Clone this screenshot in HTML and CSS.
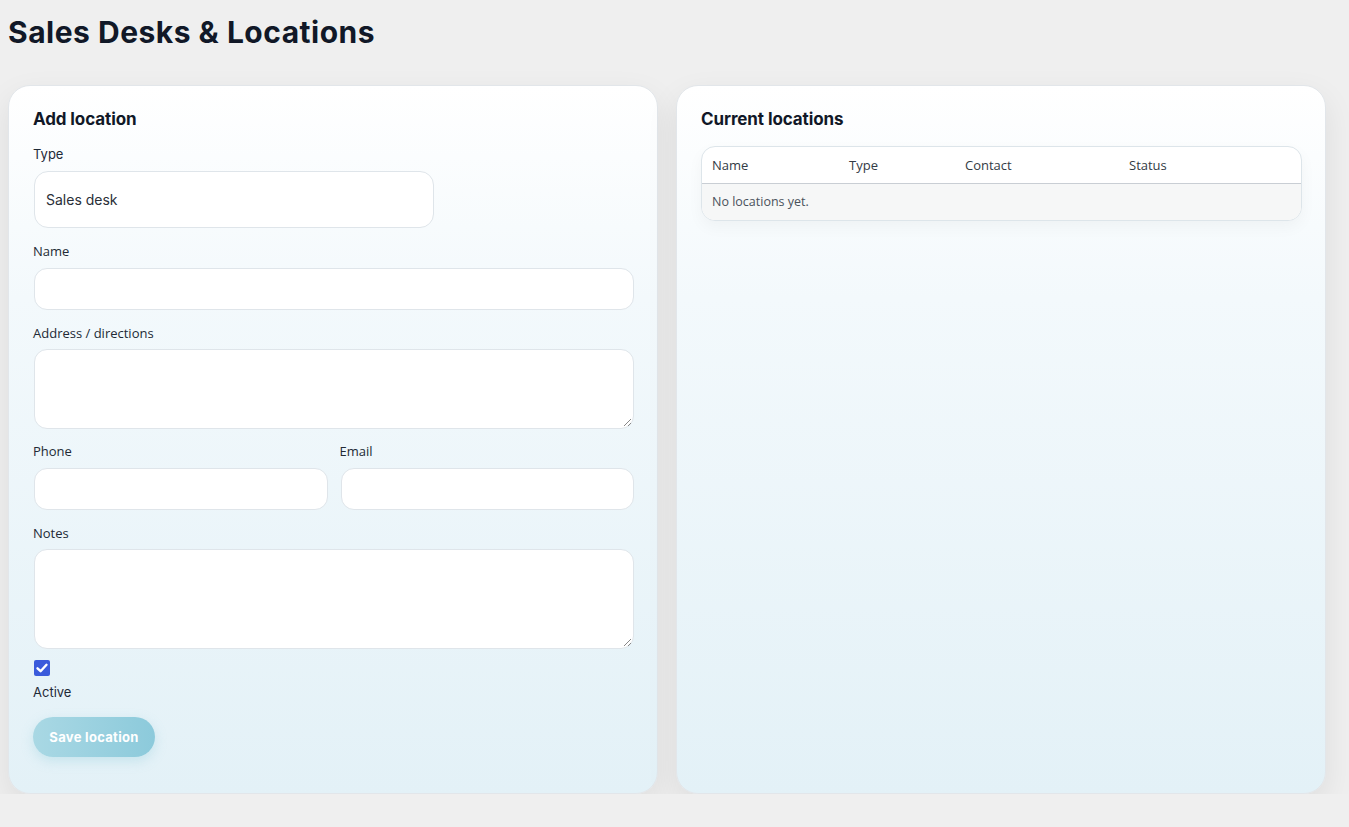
FILE: index.html
```html
<!DOCTYPE html>
<html>
<head>
<meta charset="utf-8">
<link rel="stylesheet" href="styles.css">
</head>
<body>
<h1 class="title">Sales Desks &amp; Locations</h1>
<div class="panels">
  <section class="panel">
    <h2 class="panel-title">Add location</h2>
    <label class="label">Type</label>
    <div class="select">Sales desk</div>
    <label class="label label-alt">Name</label>
    <div class="input"></div>
    <label class="label label-alt">Address / directions</label>
    <div class="textarea ta-short"><span class="grip"></span></div>
    <div class="row2">
      <div class="col">
        <label class="label label-alt">Phone</label>
        <div class="input"></div>
      </div>
      <div class="col">
        <label class="label label-alt">Email</label>
        <div class="input"></div>
      </div>
    </div>
    <label class="label label-alt">Notes</label>
    <div class="textarea ta-tall"><span class="grip"></span></div>
    <div class="check">
      <svg width="16" height="16" viewBox="0 0 16 16"><rect width="16" height="16" rx="2" fill="#3b5bdb"/><path d="M3.5 8.3 L6.6 11.2 L12.5 4.8" fill="none" stroke="#fff" stroke-width="2.4" stroke-linecap="round" stroke-linejoin="round"/></svg>
    </div>
    <div class="label active">Active</div>
    <button class="btn">Save location</button>
  </section>
  <section class="panel">
    <h2 class="panel-title">Current locations</h2>
    <div class="table">
      <div class="thead">
        <div class="c1">Name</div><div class="c2">Type</div><div class="c3">Contact</div><div class="c4">Status</div>
      </div>
      <div class="empty">No locations yet.</div>
    </div>
  </section>
</div>
</body>
</html>
```
FILE: styles.css
```css
html, body { margin: 0; padding: 0; }
body {
  background: #efefef;
  font-family: Inter, "Liberation Sans", sans-serif;
  color: #1b2130;
  padding: 0 8px;
}
.title {
  margin: 0;
  padding-top: 14px;
  height: 85px;
  box-sizing: border-box;
  font-size: 30px;
  font-weight: 700;
  letter-spacing: 0.5px;
  color: #111827;
  line-height: 36px;
}
.panels {
  display: flex;
  gap: 18px;
}
.panel {
  width: 650px;
  height: 709px;
  box-sizing: border-box;
  border-radius: 22px;
  border: 1px solid #e2e6ea;
  background: linear-gradient(180deg, #ffffff 0%, #f3f9fc 30%, #e3f1f7 100%);
  box-shadow: 0 12px 32px rgba(0,0,0,0.08);
  padding: 22px 23px 24px 24px;
}
.panel-title {
  margin: 0 0 16px;
  font-size: 17px;
  font-weight: 700;
  line-height: 22px;
  color: #111827;
  letter-spacing: -0.1px;
}
.label {
  display: block;
  font-size: 13px;
  line-height: 16px;
  color: #1f2937;
  margin-bottom: 9px;
}
.label-alt { font-family: "Open Sans", sans-serif; color: #222a35; }
.select, .input, .textarea {
  box-sizing: border-box;
  background: #fff;
  border: 1px solid #dfe5ea;
  margin-left: 1px;
}
.select {
  width: 400px;
  height: 57px;
  border-radius: 14px;
  font-size: 14px;
  line-height: 55px;
  padding-left: 11px;
  color: #2a2f38;
  margin-bottom: 15px;
}
.input {
  height: 42px;
  border-radius: 13px;
  margin-bottom: 15px;
}
.textarea {
  position: relative;
  border-radius: 13px;
  margin-top: -1px;
  margin-bottom: 15px;
}
.ta-short { height: 80px; margin-bottom: 14px; }
.ta-tall { height: 100px; margin-bottom: 11px; }
.grip {
  position: absolute;
  right: 2px;
  bottom: 2px;
  width: 7px;
  height: 7px;
  background: linear-gradient(135deg, transparent 45%, #888 45%, #888 55%, transparent 55%, transparent 75%, #888 75%, #888 85%, transparent 85%);
}
.row2 {
  display: flex;
  gap: 12px;
}
.col { flex: 1; }
.check { height: 16px; margin-left: 1px; margin-bottom: 8px; }
.check svg { display: block; }
.active { margin-bottom: 17px; }
.btn {
  border: none;
  width: 122px;
  height: 40px;
  border-radius: 20px;
  background: linear-gradient(90deg, #a9d8e4, #8ccadb);
  color: #fff;
  font-family: Inter, sans-serif;
  font-weight: 700;
  font-size: 13px;
  letter-spacing: 0.3px;
  box-shadow: 0 4px 12px rgba(140,202,219,0.35);
  padding: 0;
}
.table {
  border: 1px solid #dde5ea;
  border-radius: 14px;
  overflow: hidden;
  background: #fff;
  box-shadow: 0 6px 16px rgba(0,0,0,0.04);
  margin-top: 2px;
}
.thead {
  display: flex;
  height: 36px;
  align-items: center;
  border-bottom: 1px solid #c9ced4;
  font-family: "Open Sans", sans-serif;
  font-size: 13px;
  color: #333b45;
  padding-left: 10px;
}
.c1 { width: 137px; }
.c2 { width: 116px; }
.c3 { width: 164px; }
.empty {
  background: #f6f7f7;
  height: 36px;
  line-height: 36px;
  padding-left: 10px;
  font-family: "Open Sans", sans-serif;
  font-size: 12.5px;
  color: #4a525c;
}
```
